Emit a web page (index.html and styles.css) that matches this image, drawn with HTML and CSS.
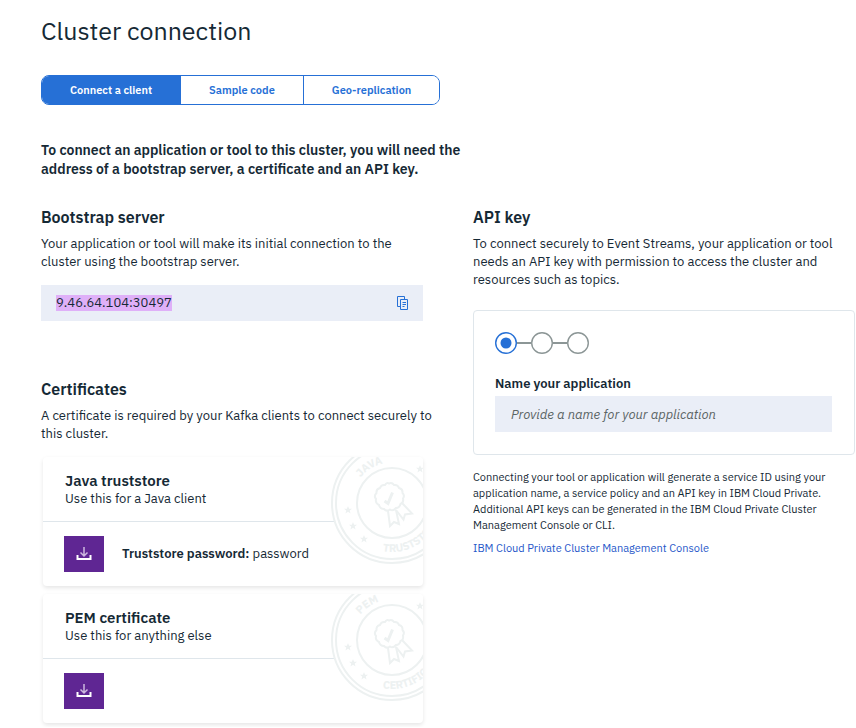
FILE: index.html
```html
<!DOCTYPE html>
<html lang="en">
<head>
<meta charset="utf-8">
<title>Cluster connection</title>
<meta name="viewport" content="width=device-width, initial-scale=1">
<link rel="stylesheet" href="styles.css">
</head>
<body>
<svg class="defs" aria-hidden="true">
  <defs>
    <path id="star" d="M0-4 1.1-1.3 4-1.2 1.8.6 2.5 3.4 0 1.8-2.5 3.4-1.8.6-4-1.2-1.1-1.3Z"/>
    <path id="arc-top" d="M-31.5-25.5A40.5 40.5 0 0 1 40.5 0"/>
    <path id="arc-bottom" d="M-9.4 48.1A49 49 0 0 0 49 0"/>
    <g id="seal">
      <circle r="60" class="seal-disc"/>
      <circle r="56"/>
      <circle r="35"/>
      <path d="M-3-19.5Q0-21 2-18Q6-18.500 7-15Q11-14 10.500-10Q13-7.500 11-4.500Q12-.5 8.500 1Q7.500 5 4 5Q1 8.500-2 6.500Q-5.500 9-8 6Q-12 6-13 2Q-17 0-16-4Q-18.500-7-15.500-10Q-16-14-12-15Q-11-18.500-7-18Q-5-21-3-19.500Z"/>
      <path d="M-4 8-2 23 2 19 7 21 4 7"/>
      <path d="M4 7 11.500 16.500 13 11.500 20 10.500 10 0"/>
      <path class="seal-check" d="M-7.500-2-4 .5 .5-10.500"/>
      <g class="seal-stars">
        <use href="#star" x="-44" y="7"/>
        <use href="#star" x="-39" y="23"/>
        <use href="#star" x="-28" y="36"/>
        <use href="#star" x="28" y="-34"/>
      </g>
    </g>
    <g id="download">
      <path class="arrow" d="M8 1V9.500M4.500 6.500 8 10 11.500 6.500"/>
      <path class="tray" d="M1.500 9V13H14.500V9"/>
    </g>
  </defs>
</svg>
<main class="page">
  <h1>Cluster connection</h1>
  <div class="tabs" role="tablist">
    <button class="tab selected" role="tab" aria-selected="true">Connect a client</button>
    <button class="tab" role="tab" aria-selected="false">Sample code</button>
    <button class="tab" role="tab" aria-selected="false">Geo-replication</button>
  </div>
  <p class="intro">To connect an application or tool to this cluster, you will need the address of a bootstrap server, a certificate and an API key.</p>

  <div class="columns">
    <div class="column">
      <section class="bootstrap">
        <h2>Bootstrap server</h2>
        <p class="lead">Your application or tool will make its initial connection to the<br>cluster using the bootstrap server.</p>
        <div class="address">
          <span class="highlight">9.46.64.104:30497</span>
          <button class="copy" aria-label="Copy address">
            <svg width="12" height="14" viewBox="0 0 12 14"><path d="M3.500 10.500H.5V.5H7.500V3M3.500 3.500H10.500V13.500H3.500ZM5.500 6.500H9M5.500 8.500H9M5.500 10.500H7.500"/></svg>
          </button>
        </div>
      </section>
      <section>
        <h2>Certificates</h2>
        <p class="lead">A certificate is required by your Kafka clients to connect securely to<br>this cluster.</p>
        <div class="cards">
          <article class="card">
            <header class="card-head">
              <h3>Java truststore</h3>
              <p>Use this for a Java client</p>
            </header>
            <svg class="stamp" viewBox="-61 -61 122 122" aria-hidden="true">
              <use href="#seal"/>
              <text><textPath href="#arc-top">JAVA</textPath></text>
              <text><textPath href="#arc-bottom">TRUSTSTORE</textPath></text>
            </svg>
            <div class="card-body">
              <button class="download" aria-label="Download Java truststore"><svg width="16" height="16" viewBox="0 0 16 16"><use href="#download"/></svg></button>
              <span><b>Truststore password:</b> password</span>
            </div>
          </article>
          <article class="card">
            <header class="card-head">
              <h3>PEM certificate</h3>
              <p>Use this for anything else</p>
            </header>
            <svg class="stamp" viewBox="-61 -61 122 122" aria-hidden="true">
              <use href="#seal"/>
              <text><textPath href="#arc-top">PEM</textPath></text>
              <text><textPath href="#arc-bottom">CERTIFICATE</textPath></text>
            </svg>
            <div class="card-body">
              <button class="download" aria-label="Download PEM certificate"><svg width="16" height="16" viewBox="0 0 16 16"><use href="#download"/></svg></button>
            </div>
          </article>
        </div>
      </section>
    </div>

    <section class="column">
      <h2>API key</h2>
      <p>To connect securely to Event Streams, your application or tool needs an API key with permission to access the cluster and resources such as topics.</p>
      <form class="wizard">
        <svg class="steps" width="94" height="22" viewBox="0 0 94 22" role="img" aria-label="Step 1 of 3">
          <path d="M22 11H36M58 11H72" class="link"/>
          <circle cx="11" cy="11" r="10.300" class="current"/>
          <circle cx="11" cy="11" r="5.500" class="dot"/>
          <circle cx="47" cy="11" r="10.300"/>
          <circle cx="83" cy="11" r="10.300"/>
        </svg>
        <label for="app-name">Name your application</label>
        <input id="app-name" type="text" placeholder="Provide a name for your application">
      </form>
      <p class="note">Connecting your tool or application will generate a service ID using your application name, a service policy and an API key in IBM Cloud Private. Additional API keys can be generated in the IBM Cloud Private Cluster Management Console or CLI.</p>
      <a class="console" href="#console">IBM Cloud Private Cluster Management Console</a>
    </section>
  </div>
</main>
</body>
</html>
```
FILE: styles.css
```css
* { box-sizing: border-box; }

body {
  margin: 0;
  background: #fff;
  color: #152935;
  font: 13px/18px "IBM Plex Sans", Roboto, "Liberation Sans", sans-serif;
}

h1, h2, h3, p { margin: 0; }
button, input { font: inherit; border: 0; border-radius: 0; }
button { cursor: pointer; }
b, h2, h3, label { font-weight: 600; }

.defs { position: absolute; width: 0; height: 0; }

.page { padding: 16px 1px 4px 41px; }

h1 { font-size: 25px; line-height: 30px; font-weight: 400; }

.tabs {
  display: flex;
  width: max-content;
  margin-top: 29px;
  border: 1px solid #2670d6;
  border-radius: 8px;
  overflow: hidden;
}
.tab {
  height: 28px;
  padding: 0 28px;
  background: #fff;
  color: #2670d6;
  font-size: 11px;
  font-weight: 600;
}
.tab + .tab { border-left: 1px solid #2670d6; }
.tab.selected { background: #2670d6; color: #fff; }

.intro {
  max-width: 440px;
  margin-top: 36px;
  font-size: 14px;
  line-height: 19px;
  font-weight: 600;
}

.columns {
  display: grid;
  grid-template-columns: 1fr 1fr;
  gap: 50px;
  margin-top: 28px;
}
.column { min-width: 0; }

h2 { margin-bottom: 8px; font-size: 16px; line-height: 20px; }

/* lead text may run a little into the column gap */
.lead { margin-right: -16px; }

.bootstrap { margin-bottom: 58px; }
.address {
  display: flex;
  align-items: center;
  justify-content: space-between;
  height: 36px;
  margin-top: 14px;
  padding: 0 14px 0 15px;
  background: #eaeef7;
}
.highlight { line-height: 16px; background: #dfb0f8; }
.copy { display: flex; padding: 0; background: none; }
.copy svg { fill: none; stroke: #2670d6; }

.cards { display: grid; gap: 8px; margin: 14px 0 0 2px; }
.card {
  position: relative;
  overflow: hidden;
  border-radius: 4px;
  box-shadow: 0 2px 4px rgba(0, 0, 0, 0.1);
}
.card-head { height: 65px; padding: 14px 22px 0; border-bottom: 1px solid #dfe6eb; }
h3 { font-size: 15px; line-height: 19px; }
.card-body { display: flex; align-items: center; gap: 18px; padding: 14px 21px; }

.stamp {
  position: absolute;
  top: -15px;
  right: -30px;
  width: 122px;
  height: 122px;
  fill: none;
  stroke: #edf1f1;
  stroke-width: 2;
}
.seal-disc { fill: #fff; }
.seal-check { stroke-width: 3; }
.seal-stars, .stamp text { fill: #edf1f1; stroke: none; }
.stamp text { font-size: 11px; font-weight: 700; }

.download {
  display: flex;
  align-items: center;
  justify-content: center;
  width: 40px;
  height: 36px;
  padding: 0;
  background: #5f2693;
}
.download svg { fill: none; stroke: #fff; }
.arrow { stroke: #cdb9de; stroke-width: 1.5; }
.tray { stroke-width: 2; }

.wizard {
  display: flex;
  flex-direction: column;
  margin-top: 21px;
  padding: 21px 22px 22px 21px;
  border: 1px solid #dfe6eb;
  border-radius: 4px;
}
.steps { margin-bottom: 21px; fill: #fff; stroke: #8c9696; stroke-width: 1.4; }
.steps .link { stroke-width: 2; }
.steps .current { stroke: #2670d6; }
.steps .dot { fill: #2670d6; stroke: none; }
label { margin-bottom: 3px; }
input { width: 100%; height: 36px; padding: 0 16px; background: #eaeef7; color: inherit; }
input::placeholder { color: #5a6464; font-style: italic; opacity: 1; }

.note { margin-top: 14px; font-size: 11px; line-height: 16px; }
.console { display: block; margin-top: 7px; color: #2657c9; font-size: 11px; line-height: 16px; text-decoration: none; }
```
